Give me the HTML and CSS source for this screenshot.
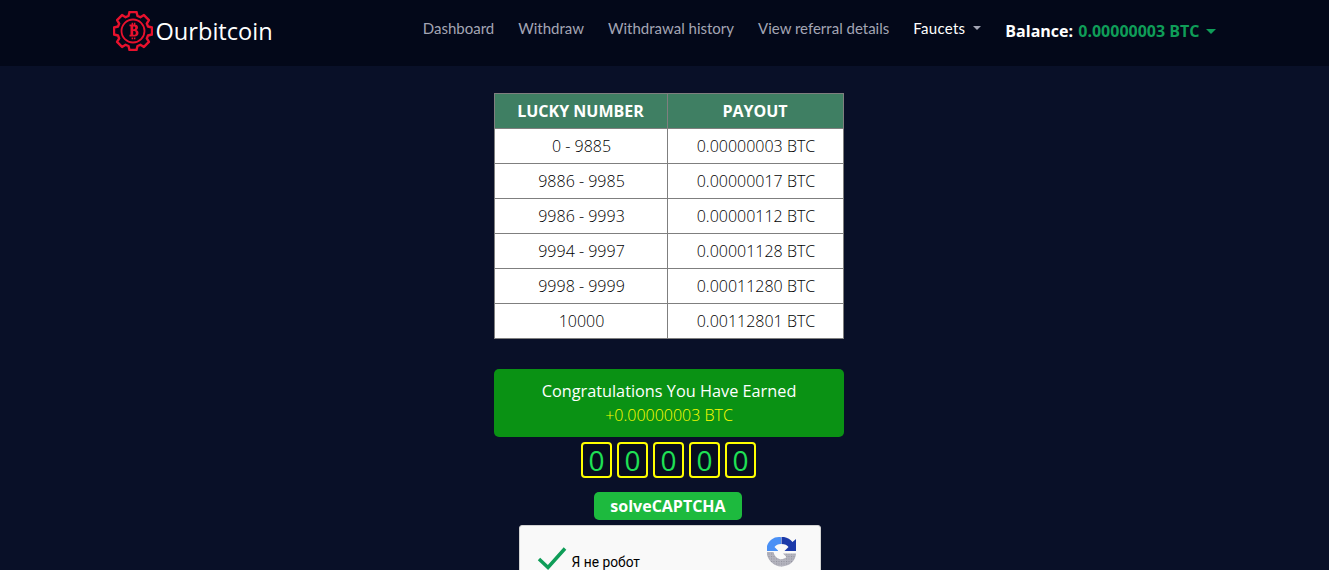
FILE: index.html
```html
<!DOCTYPE html>
<html lang="en">
<head>
<meta charset="utf-8">
<title>Ourbitcoin</title>
<link rel="stylesheet" href="styles.css">
</head>
<body>
<header class="topbar">
  <div class="topbar-inner">
    <a class="brand" href="#">
      <svg class="brand-icon" viewBox="0 0 40 40" width="40" height="40" aria-hidden="true">
        <g transform="translate(20 20)">
          <path class="gear" d="M-4.500 -15L-3.500 -19H3.500L4.500 -15L7.420 -13.790L10.960 -15.910L15.910 -10.960L13.790 -7.420L15 -4.500L19 -3.500V3.500L15 4.500L13.790 7.420L15.910 10.960L10.960 15.910L7.420 13.790L4.500 15L3.500 19H-3.500L-4.500 15L-7.420 13.790L-10.960 15.910L-15.910 10.960L-13.790 7.420L-15 4.500L-19 3.500V-3.500L-15 -4.500L-13.790 -7.420L-15.910 -10.960L-10.960 -15.910L-7.420 -13.790Z"/>
          <circle class="gear thin" r="11.500"/>
        </g>
        <path class="coin" d="M16.500 13.500h5c2.200 0 3.500 1.200 3.500 3 0 1.200-.6 2.100-1.700 2.600 1.400.4 2.200 1.500 2.200 2.900 0 2.100-1.500 3.500-3.800 3.500h-5.200v-1.800h1V15.300h-1zm3.700 1.900v2.900h.8c.8 0 1.300-.6 1.300-1.450s-.5-1.450-1.300-1.450zm0 4.600v3.800h1c1 0 1.600-.7 1.600-1.900s-.6-1.900-1.600-1.900zM18.600 11.800h1.500v1.700h-1.500zm2.300 0h1.500v1.700h-1.500zM18.600 26.500h1.500v1.700h-1.500zm2.300 0h1.500v1.700h-1.500z"/>
      </svg>
      <span class="brand-name">Ourbitcoin</span>
    </a>
    <nav class="nav">
      <a class="nav-link" href="#">Dashboard</a>
      <a class="nav-link" href="#">Withdraw</a>
      <a class="nav-link" href="#">Withdrawal history</a>
      <a class="nav-link" href="#">View referral details</a>
      <a class="nav-link active" href="#">Faucets<span class="caret"></span></a>
      <a class="balance" href="#">Balance: <span class="balance-value">0.00000003 BTC</span><span class="caret caret-green"></span></a>
    </nav>
  </div>
</header>
<main class="content">
  <table class="payouts">
    <thead>
      <tr><th class="col-a">LUCKY NUMBER</th><th>PAYOUT</th></tr>
    </thead>
    <tbody>
      <tr><td>0 - 9885</td><td>0.00000003 BTC</td></tr>
      <tr><td>9886 - 9985</td><td>0.00000017 BTC</td></tr>
      <tr><td>9986 - 9993</td><td>0.00000112 BTC</td></tr>
      <tr><td>9994 - 9997</td><td>0.00001128 BTC</td></tr>
      <tr><td>9998 - 9999</td><td>0.00011280 BTC</td></tr>
      <tr><td>10000</td><td>0.00112801 BTC</td></tr>
    </tbody>
  </table>
  <div class="earned">
    <div>Congratulations You Have Earned</div>
    <div class="earned-amount">+0.00000003 BTC</div>
  </div>
  <div class="digits">
    <span class="digit">0</span><span class="digit">0</span><span class="digit">0</span><span class="digit">0</span><span class="digit">0</span>
  </div>
  <button class="captcha-tag" type="button">solveCAPTCHA</button>
  <div class="recaptcha">
    <svg class="check" viewBox="0 0 30 24" width="30" height="24" aria-hidden="true"><path d="M2 13l9 8.500L28 2.500" /></svg>
    <span class="recaptcha-label">Я не робот</span>
    <svg class="recaptcha-logo" viewBox="0 0 32 32" width="32" height="32" aria-hidden="true">
      <defs>
        <pattern id="dots" width="2.500" height="2.500" patternUnits="userSpaceOnUse">
          <rect width="2.500" height="2.500" fill="#b4b4be"/>
          <rect width="1" height="1" fill="#8f8f9c"/>
        </pattern>
      </defs>
      <path fill="#4a90f5" d="M1 15V10C3 4 8 .5 14 1l1 .2v6.800c-3 0-5 1-6.500 3L12 14.500V15z"/>
      <path fill="#1c3aa9" d="M15.500 1H18c3.500.5 6.500 2.500 8.500 5L30 3v12H18.500l4-4C21 9 19 8 15.500 8z"/>
      <path fill="url(#dots)" d="M1 16h6.500c.5 3 2.500 6 6 7 3 .6 5-.3 7-2l-3.500-3.500H30v1c-1 6.500-6 11.500-14 12C9 31 3 25.500 1 19z"/>
    </svg>
  </div>
</main>
</body>
</html>
```
FILE: styles.css
```css
html, body {
  margin: 0;
  padding: 0;
  height: 570px;
  overflow: hidden;
}
body {
  background: #091028;
  font-family: "Open Sans", "Liberation Sans", sans-serif;
  color: #212529;
}
a { text-decoration: none; }

.topbar {
  height: 66px;
  background: #030819;
}
.topbar-inner {
  width: 1110px;
  margin: 0 auto;
  height: 100%;
  padding-left: 3px;
  box-sizing: border-box;
  display: flex;
  align-items: flex-start;
  justify-content: space-between;
}
.brand {
  display: flex;
  align-items: center;
  gap: 3px;
  margin-top: 11px;
}
.brand-icon { display: block; }
.gear {
  fill: none;
  stroke: #e8112d;
  stroke-width: 2.400;
  stroke-linejoin: round;
}
.gear.thin { stroke-width: 1.800; }
.coin { fill: #e8112d; }
.brand-name {
  color: #fff;
  font-size: 23.600px;
  line-height: 40px;
}
.nav {
  display: flex;
  align-items: flex-start;
  gap: 24px;
  padding: 20px 4px 0 0;
}
.nav-link {
  font-family: "Lato", "Liberation Sans", sans-serif;
  font-size: 15px;
  line-height: 16px;
  color: #a3a5b4;
}
.nav-link.active {
  color: #fff;
  letter-spacing: 0.3px;
}
.caret {
  display: inline-block;
  margin-left: 8px;
  vertical-align: 4px;
  border-top: 4px solid #a3a5b4;
  border-left: 4px solid transparent;
  border-right: 4px solid transparent;
}
.balance {
  color: #fff;
  font-size: 16px;
  font-weight: 700;
  line-height: 22px;
}
.balance-value {
  color: #0f9d58;
  margin-left: 1px;
}
.caret-green {
  margin-left: 6px;
  vertical-align: 3px;
  border-top: 5px solid #0f9d58;
  border-left: 5px solid transparent;
  border-right: 5px solid transparent;
}

.content {
  display: flex;
  flex-direction: column;
  align-items: center;
  padding: 27px 0 0 8px;
}
.payouts {
  width: 350px;
  border-collapse: collapse;
  background: #fff;
  font-size: 16px;
  text-align: center;
  font-weight: 300;
}
.payouts th, .payouts td {
  border: 1px solid #7f7f7f;
  padding: 0;
  box-sizing: border-box;
}
.payouts td {
  height: 35px;
  padding-left: 2px;
  color: #000;
}
.payouts th {
  background: #3f7f63;
  color: #fff;
  font-weight: 700;
  height: 35px;
}
.col-a { width: 173px; }
.earned {
  margin-top: 30px;
  width: 350px;
  height: 68px;
  box-sizing: border-box;
  padding: 10px 0 0 1px;
  background: #0a9214;
  border-radius: 5px;
  color: #fff;
  font-size: 16.300px;
  line-height: 24px;
  text-align: center;
}
.earned-amount {
  color: #ff0;
  font-size: 16px;
  font-weight: 300;
}
.digits {
  display: flex;
  gap: 5px;
  margin-top: 5px;
}
.digit {
  width: 31px;
  height: 36px;
  box-sizing: border-box;
  border: 2px solid #ff0;
  border-radius: 4px;
  background: #070c1e;
  color: #1fe055;
  font-size: 28px;
  line-height: 32px;
  text-align: center;
  font-weight: 400;
}
.captcha-tag {
  margin: 14px 1px 0 0;
  width: 148px;
  height: 28px;
  border: 0;
  padding: 0;
  border-radius: 5px;
  background: #1dba3e;
  color: #fff;
  font-family: inherit;
  font-size: 16px;
  font-weight: 700;
}
.recaptcha {
  position: relative;
  margin: 5px 0 0 2px;
  width: 302px;
  height: 76px;
  flex: none;
  box-sizing: border-box;
  background: #f9f9f9;
  border: 1px solid #d3d3d3;
  border-radius: 3px;
  display: flex;
  align-items: flex-start;
}
.check {
  margin: 20px 0 0 17px;
  fill: none;
  stroke: #0f9d58;
  stroke-width: 3.500;
}
.recaptcha-label {
  margin: 27px 0 0 5px;
  font-family: "Roboto", "Liberation Sans", sans-serif;
  font-size: 13.800px;
  line-height: 18px;
  color: #000;
}
.recaptcha-logo {
  position: absolute;
  left: 246px;
  top: 10px;
}
```
